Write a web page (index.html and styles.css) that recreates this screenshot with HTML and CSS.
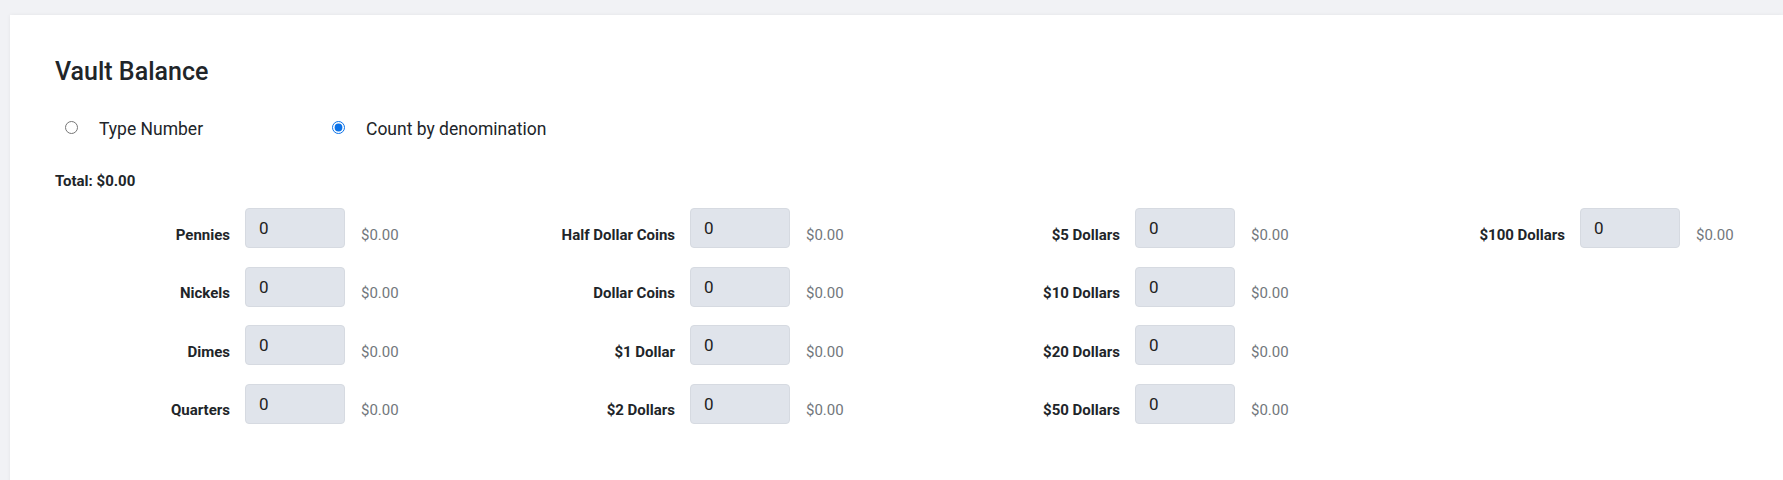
FILE: index.html
```html
<!DOCTYPE html>
<html lang="en">
<head>
  <meta charset="UTF-8">
  <title>Vault Balance</title>
  <link rel="stylesheet" href="styles.css">
</head>
<body>
  <div class="card">
    <h2 class="card-title">Vault Balance</h2>

    <div class="mode-options">
      <label class="mode-option">
        <input type="radio" name="mode" value="number">
        <span>Type Number</span>
      </label>
      <label class="mode-option">
        <input type="radio" name="mode" value="denomination" checked>
        <span>Count by denomination</span>
      </label>
    </div>

    <p class="total">Total: $0.00</p>

    <div class="denoms">
      <div class="denom"><label class="denom-label">Pennies</label><input class="denom-input" type="text" value="0"><span class="denom-amount">$0.00</span></div>
      <div class="denom"><label class="denom-label">Nickels</label><input class="denom-input" type="text" value="0"><span class="denom-amount">$0.00</span></div>
      <div class="denom"><label class="denom-label">Dimes</label><input class="denom-input" type="text" value="0"><span class="denom-amount">$0.00</span></div>
      <div class="denom"><label class="denom-label">Quarters</label><input class="denom-input" type="text" value="0"><span class="denom-amount">$0.00</span></div>

      <div class="denom"><label class="denom-label">Half Dollar Coins</label><input class="denom-input" type="text" value="0"><span class="denom-amount">$0.00</span></div>
      <div class="denom"><label class="denom-label">Dollar Coins</label><input class="denom-input" type="text" value="0"><span class="denom-amount">$0.00</span></div>
      <div class="denom"><label class="denom-label">$1 Dollar</label><input class="denom-input" type="text" value="0"><span class="denom-amount">$0.00</span></div>
      <div class="denom"><label class="denom-label">$2 Dollars</label><input class="denom-input" type="text" value="0"><span class="denom-amount">$0.00</span></div>

      <div class="denom"><label class="denom-label">$5 Dollars</label><input class="denom-input" type="text" value="0"><span class="denom-amount">$0.00</span></div>
      <div class="denom"><label class="denom-label">$10 Dollars</label><input class="denom-input" type="text" value="0"><span class="denom-amount">$0.00</span></div>
      <div class="denom"><label class="denom-label">$20 Dollars</label><input class="denom-input" type="text" value="0"><span class="denom-amount">$0.00</span></div>
      <div class="denom"><label class="denom-label">$50 Dollars</label><input class="denom-input" type="text" value="0"><span class="denom-amount">$0.00</span></div>

      <div class="denom"><label class="denom-label">$100 Dollars</label><input class="denom-input" type="text" value="0"><span class="denom-amount">$0.00</span></div>
    </div>
  </div>
</body>
</html>
```

FILE: styles.css
```css
html, body {
  margin: 0;
  padding: 0;
  height: 100%;
  overflow: hidden;
}

body {
  background-color: #f1f2f5;
  color: #212529;
  font-family: Roboto, "Liberation Sans", Arial, sans-serif;
  padding: 15px 0 0 10px;
  box-sizing: border-box;
}

.card {
  background: #fff;
  min-height: 600px;
  padding: 42px 0 0 45px;
  box-shadow: 0 0 4px rgba(0, 0, 0, 0.06);
}

.card-title {
  margin: 0;
  font-size: 25px;
  font-weight: 500;
  line-height: 30px;
}

.mode-options {
  display: flex;
  margin-top: 30px;
  padding-left: 10px;
}

.mode-option {
  display: flex;
  align-items: center;
  width: 267px;
  font-size: 17.5px;
  line-height: 24px;
  color: #212529;
}

.mode-option input {
  width: 13px;
  height: 13px;
  margin: -3px 21px 0 0;
  accent-color: #0b72e8;
}

.total {
  margin: 30px 0 0;
  font-size: 15px;
  font-weight: 700;
  line-height: 20px;
}

.denoms {
  display: grid;
  grid-template-columns: 445px 445px 445px auto;
  grid-template-rows: repeat(4, 40px);
  grid-auto-flow: column;
  row-gap: 18.6px;
  margin-top: 17px;
}

.denom {
  display: flex;
  align-items: center;
}

.denom-label {
  width: 175px;
  margin-right: 15px;
  padding-top: 13px;
  text-align: right;
  font-size: 15px;
  font-weight: 700;
  line-height: 20px;
}

.denom-input {
  box-sizing: border-box;
  width: 100px;
  height: 40px;
  padding: 0 13px;
  border: 1px solid #d6dae1;
  border-radius: 4px;
  background: #e0e4eb;
  color: #222;
  font-family: Roboto, "Liberation Sans", Arial, sans-serif;
  font-size: 17px;
  outline: none;
}

.denom-amount {
  margin-left: 16px;
  padding-top: 13px;
  font-size: 15px;
  line-height: 20px;
  color: #72777c;
}
```
